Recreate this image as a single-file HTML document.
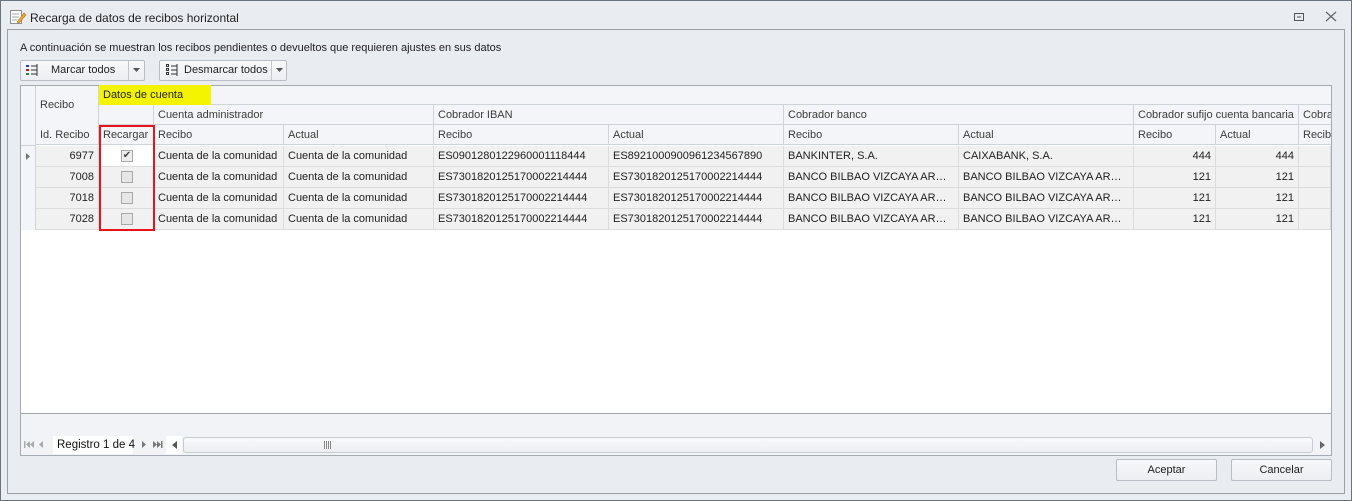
<!DOCTYPE html>
<html><head><meta charset="utf-8"><style>
*{box-sizing:border-box;margin:0;padding:0}
body{width:1352px;height:501px;overflow:hidden;background:#e9ecf1;font-family:"Liberation Sans",sans-serif;font-size:11px;color:#1e1e1e;position:relative}
.a{position:absolute;white-space:nowrap;overflow:hidden;text-overflow:ellipsis}
.win{left:0;top:0;width:1352px;height:501px;border:1px solid #6b7280;background:#e9ecf1}
.inner{left:7px;top:29px;width:1338px;height:465px;border:1px solid #9aa0a8;background:#e9ecf1}
.btn{border:1px solid #b9bec6;border-radius:2px;background:linear-gradient(#f7f8fa,#eceef2);}
.grid{left:20px;top:85px;width:1312px;height:371px;border:1px solid #a5abb3;background:#fff}
.h{background:#f3f5f8;border-right:1px solid #cfd4da;border-bottom:1px solid #cfd4da;color:#3c3c3c;padding:4px 4px 0;height:20px;line-height:13px}
.c{background:#f1f1f1;border-right:1px solid #dcdcdc;border-bottom:1px solid #dcdcdc;padding:4px 4px;height:21px;line-height:13px}
.r{text-align:right}
.cb{width:12px;height:12px;border:1px solid #a8a8a8;background:#e6e6e6;position:absolute;left:22px;top:4px}
</style></head><body>
<div class="a win"></div>
<svg class="a" style="left:9px;top:8px" width="18" height="18" viewBox="0 0 18 18"><rect x="1.5" y="2.5" width="11" height="13" fill="#fff" stroke="#8a8f96"/><line x1="3" y1="6" x2="10" y2="6" stroke="#9aa"/><line x1="3" y1="9" x2="10" y2="9" stroke="#9aa"/><line x1="3" y1="12" x2="8" y2="12" stroke="#9aa"/><path d="M8 14 L15 5 L17 7 L10 15 Z" fill="#f0a830" stroke="#b07010" stroke-width=".6"/></svg>
<div class="a" style="left:30px;top:11px;font-size:12px;color:#222">Recarga de datos de recibos horizontal</div>
<svg class="a" style="left:1293px;top:12px" width="12" height="10"><rect x="1.5" y="1.5" width="9" height="7" fill="none" stroke="#555"/><line x1="4" y1="5" x2="8" y2="5" stroke="#555"/></svg>
<svg class="a" style="left:1325px;top:11px" width="12" height="11"><path d="M1 1L11 10M11 1L1 10" stroke="#666" stroke-width="1.2"/></svg>
<div class="a inner"></div>
<div class="a" style="left:20px;top:42px;color:#222">A continuación se muestran los recibos pendientes o devueltos que requieren ajustes en sus datos</div>
<div class="a btn" style="left:20px;top:60px;width:125px;height:21px"></div>
<div class="a" style="left:128px;top:61px;width:1px;height:19px;background:#c4c8ce"></div>
<svg class="a" style="left:26px;top:64px" width="12" height="13"><rect x="0" y="1" width="3" height="2" fill="#2244aa"/><rect x="0" y="5" width="3" height="2" fill="#aa2222"/><rect x="0" y="9" width="3" height="2" fill="#228833"/><path d="M5 2h6M5 6h6M5 10h6" stroke="#333"/><path d="M11 0v12" stroke="#333"/></svg>
<div class="a" style="left:51px;top:64px">Marcar todos</div>
<svg class="a" style="left:133px;top:68px" width="7" height="4"><path d="M0 0h7L3.5 4z" fill="#555"/></svg>
<div class="a btn" style="left:159px;top:60px;width:128px;height:21px"></div>
<div class="a" style="left:271px;top:61px;width:1px;height:19px;background:#c4c8ce"></div>
<svg class="a" style="left:166px;top:64px" width="12" height="13"><rect x=".5" y=".5" width="2" height="2" fill="none" stroke="#333"/><rect x=".5" y="4.5" width="2" height="2" fill="none" stroke="#333"/><rect x=".5" y="8.5" width="2" height="2" fill="none" stroke="#333"/><path d="M5 2h6M5 6h6M5 10h6" stroke="#333"/><path d="M11 0v12" stroke="#333"/></svg>
<div class="a" style="left:184px;top:64px">Desmarcar todos</div>
<svg class="a" style="left:276px;top:68px" width="7" height="4"><path d="M0 0h7L3.5 4z" fill="#555"/></svg>

<div class="a grid"></div>
<div class="a h" style="left:21px;top:86px;width:15px;height:60px"></div>
<div class="a h" style="left:36px;top:86px;width:63px;height:40px;padding-top:13px">Recibo</div>
<div class="a h" style="left:99px;top:86px;width:1232px;height:19px;border-right:none"></div>
<div class="a" style="left:99px;top:85px;width:112px;height:20px;background:#f4f400;padding:4px 4px;color:#222">Datos de cuenta</div>
<div class="a h" style="left:99px;top:105px;width:55px"></div>
<div class="a h" style="left:154px;top:105px;width:280px">Cuenta administrador</div>
<div class="a h" style="left:434px;top:105px;width:350px">Cobrador IBAN</div>
<div class="a h" style="left:784px;top:105px;width:350px">Cobrador banco</div>
<div class="a h" style="left:1134px;top:105px;width:165px">Cobrador sufijo cuenta bancaria</div>
<div class="a h" style="left:1299px;top:105px;width:32px;border-right:none;text-overflow:clip">Cobrador</div>
<div class="a h" style="left:36px;top:125px;width:63px">Id. Recibo</div>
<div class="a h" style="left:99px;top:125px;width:55px">Recargar</div>
<div class="a h" style="left:154px;top:125px;width:130px">Recibo</div>
<div class="a h" style="left:284px;top:125px;width:150px">Actual</div>
<div class="a h" style="left:434px;top:125px;width:175px">Recibo</div>
<div class="a h" style="left:609px;top:125px;width:175px">Actual</div>
<div class="a h" style="left:784px;top:125px;width:175px">Recibo</div>
<div class="a h" style="left:959px;top:125px;width:175px">Actual</div>
<div class="a h" style="left:1134px;top:125px;width:82px">Recibo</div>
<div class="a h" style="left:1216px;top:125px;width:83px">Actual</div>
<div class="a h" style="left:1299px;top:125px;width:32px;border-right:none;text-overflow:clip">Recibo</div>

<div class="a" style="left:21px;top:146px;width:15px;height:84px;background:#f3f5f8;border-right:1px solid #cfd4da"></div>
<svg class="a" style="left:26px;top:153px" width="4" height="7"><path d="M0 0v7l4-3.5z" fill="#777"/></svg>

<div class="a c r" style="left:36px;top:146px;width:63px">6977</div>
<div class="a c" style="left:99px;top:146px;width:55px;background:#fff"><div class="cb" style="background:#eee;text-align:center;font-size:10px;line-height:10px;color:#444">✔</div></div>
<div class="a c" style="left:154px;top:146px;width:130px">Cuenta de la comunidad</div>
<div class="a c" style="left:284px;top:146px;width:150px">Cuenta de la comunidad</div>
<div class="a c" style="left:434px;top:146px;width:175px">ES0901280122960001118444</div>
<div class="a c" style="left:609px;top:146px;width:175px">ES8921000900961234567890</div>
<div class="a c" style="left:784px;top:146px;width:175px">BANKINTER, S.A.</div>
<div class="a c" style="left:959px;top:146px;width:175px">CAIXABANK, S.A.</div>
<div class="a c r" style="left:1134px;top:146px;width:82px">444</div>
<div class="a c r" style="left:1216px;top:146px;width:83px">444</div>
<div class="a c" style="left:1299px;top:146px;width:32px"></div>

<div class="a c r" style="left:36px;top:167px;width:63px">7008</div>
<div class="a c" style="left:99px;top:167px;width:55px"><div class="cb"></div></div>
<div class="a c" style="left:154px;top:167px;width:130px">Cuenta de la comunidad</div>
<div class="a c" style="left:284px;top:167px;width:150px">Cuenta de la comunidad</div>
<div class="a c" style="left:434px;top:167px;width:175px">ES7301820125170002214444</div>
<div class="a c" style="left:609px;top:167px;width:175px">ES7301820125170002214444</div>
<div class="a c" style="left:784px;top:167px;width:175px">BANCO BILBAO VIZCAYA ARGEN...</div>
<div class="a c" style="left:959px;top:167px;width:175px">BANCO BILBAO VIZCAYA ARGEN...</div>
<div class="a c r" style="left:1134px;top:167px;width:82px">121</div>
<div class="a c r" style="left:1216px;top:167px;width:83px">121</div>
<div class="a c" style="left:1299px;top:167px;width:32px"></div>

<div class="a c r" style="left:36px;top:188px;width:63px">7018</div>
<div class="a c" style="left:99px;top:188px;width:55px"><div class="cb"></div></div>
<div class="a c" style="left:154px;top:188px;width:130px">Cuenta de la comunidad</div>
<div class="a c" style="left:284px;top:188px;width:150px">Cuenta de la comunidad</div>
<div class="a c" style="left:434px;top:188px;width:175px">ES7301820125170002214444</div>
<div class="a c" style="left:609px;top:188px;width:175px">ES7301820125170002214444</div>
<div class="a c" style="left:784px;top:188px;width:175px">BANCO BILBAO VIZCAYA ARGEN...</div>
<div class="a c" style="left:959px;top:188px;width:175px">BANCO BILBAO VIZCAYA ARGEN...</div>
<div class="a c r" style="left:1134px;top:188px;width:82px">121</div>
<div class="a c r" style="left:1216px;top:188px;width:83px">121</div>
<div class="a c" style="left:1299px;top:188px;width:32px"></div>

<div class="a c r" style="left:36px;top:209px;width:63px">7028</div>
<div class="a c" style="left:99px;top:209px;width:55px"><div class="cb"></div></div>
<div class="a c" style="left:154px;top:209px;width:130px">Cuenta de la comunidad</div>
<div class="a c" style="left:284px;top:209px;width:150px">Cuenta de la comunidad</div>
<div class="a c" style="left:434px;top:209px;width:175px">ES7301820125170002214444</div>
<div class="a c" style="left:609px;top:209px;width:175px">ES7301820125170002214444</div>
<div class="a c" style="left:784px;top:209px;width:175px">BANCO BILBAO VIZCAYA ARGEN...</div>
<div class="a c" style="left:959px;top:209px;width:175px">BANCO BILBAO VIZCAYA ARGEN...</div>
<div class="a c r" style="left:1134px;top:209px;width:82px">121</div>
<div class="a c r" style="left:1216px;top:209px;width:83px">121</div>
<div class="a c" style="left:1299px;top:209px;width:32px"></div>

<div class="a" style="left:99px;top:125px;width:56px;height:106px;border:2px solid #e8141b"></div>

<div class="a" style="left:21px;top:413px;width:1310px;height:42px;background:#f1f3f6;border-top:1px solid #a5abb3"></div>
<svg class="a" style="left:24px;top:441px" width="24" height="7"><path d="M0 0h1.5v7H0zM6 0v7L2 3.5zM10 0v7L6 3.5z" fill="#aaa"/><path d="M19 0v7l-4-3.5z" fill="#aaa"/></svg>
<div class="a" style="left:53px;top:436px;width:80px;height:18px;background:#fff"></div>
<div class="a" style="left:57px;top:439px;font-size:11.5px;color:#111">Registro 1 de 4</div>
<svg class="a" style="left:142px;top:441px" width="24" height="7"><path d="M0 0v7l4-3.5z" fill="#777"/><path d="M11 0v7l4-3.5zM15 0v7l4-3.5zM19 0h1.5v7H19z" fill="#777"/></svg>
<div class="a" style="left:166px;top:436px;width:16px;height:18px;background:#fff"></div>
<svg class="a" style="left:172px;top:441px" width="5" height="8"><path d="M5 0v8L0 4z" fill="#555"/></svg>
<div class="a" style="left:183px;top:437px;width:1130px;height:16px;border:1px solid #c7ccd2;border-radius:3px;background:linear-gradient(#f8f9fb,#eceef2)"></div>
<svg class="a" style="left:324px;top:441px" width="8" height="8"><path d="M.5 0v8M2.5 0v8M4.5 0v8M6.5 0v8" stroke="#888"/></svg>
<svg class="a" style="left:1320px;top:441px" width="5" height="8"><path d="M0 0v8l5-4z" fill="#666"/></svg>

<div class="a btn" style="left:1116px;top:459px;width:101px;height:22px;text-align:center;line-height:20px">Aceptar</div>
<div class="a btn" style="left:1231px;top:459px;width:101px;height:22px;text-align:center;line-height:20px">Cancelar</div>
</body></html>
